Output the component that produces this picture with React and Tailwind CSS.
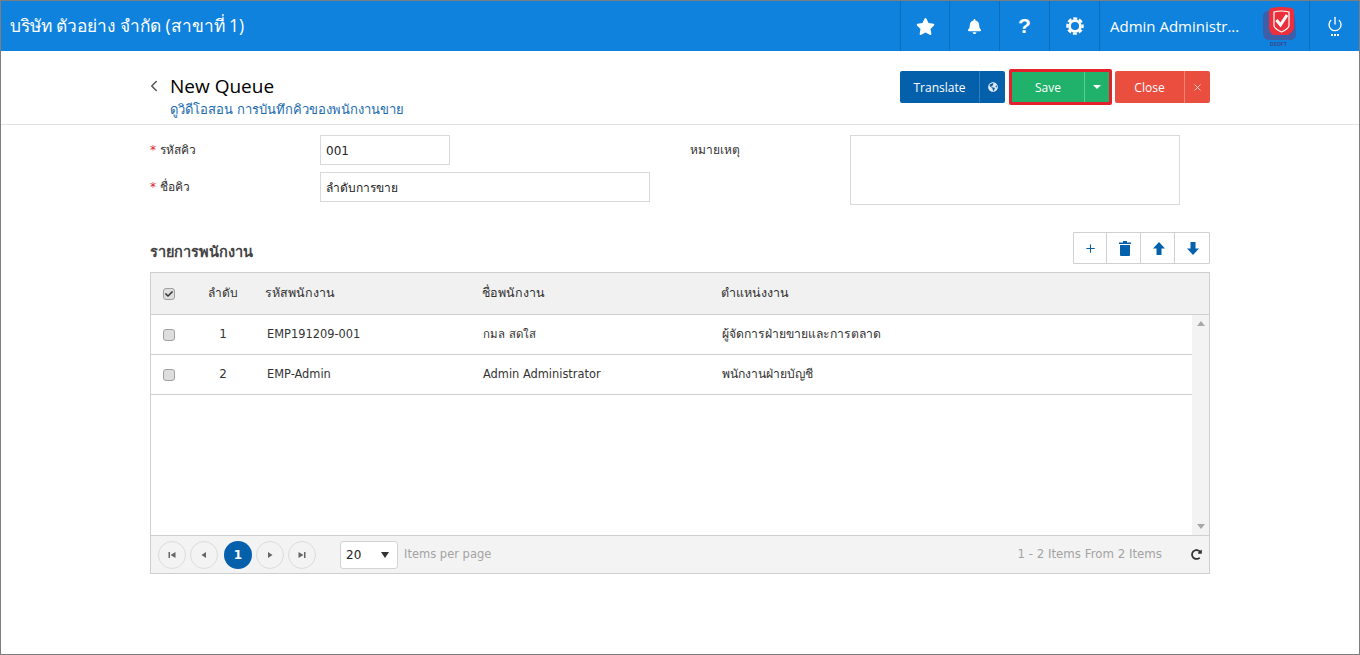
import React from "react";
import { FaStar, FaBell, FaGlobeAmericas, FaCheck, FaRedoAlt } from "react-icons/fa";
import { Power, ChevronLeft, Plus, X } from "lucide-react";

const employees = [
  { no: 1, code: "EMP191209-001", name: "กมล สดใส", position: "ผู้จัดการฝ่ายขายและการตลาด" },
  { no: 2, code: "EMP-Admin", name: "Admin Administrator", position: "พนักงานฝ่ายบัญชี" },
];

const rowGrid = "grid grid-cols-[36px_72px_216px_239px_1fr] items-center pb-[1px]";

function Gear() {
  return (
    <svg width="18" height="18" viewBox="0 0 20 20">
      <circle cx="10" cy="10" r="6" fill="none" stroke="white" strokeWidth="3" />
      <circle cx="10" cy="10" r="8.4" fill="none" stroke="white" strokeWidth="2.6" strokeDasharray="4.4 2.2" strokeDashoffset="2.2" />
    </svg>
  );
}

function Logo() {
  return (
    <svg width="38" height="44" viewBox="0 0 38 44">
      <path d="M6 7 L26 6 Q33 6 34 14 L35 30 Q35 36 28 36 L8 36 Q2 36 2 28 L2 12 Q2 8 6 7 Z" fill="#3d5ea8" />
      <path d="M10 4 Q20 2 31 4 Q33 5 33 8 L33 24 Q32 28 27 31 L12 31 Q9 29 8 24 L8 8 Q8 5 10 4 Z" fill="#ec2f3a" />
      <path d="M13 8 Q20 6 28 8 L28 22 Q27 25 20.5 28 Q14 25 13 22 Z" fill="none" stroke="white" strokeWidth="1.2" />
      <path d="M15.5 16 L19.5 21 L26 11" fill="none" stroke="white" strokeWidth="3" />
      <text x="9" y="42" fontSize="5" fontWeight="700" fill="#39488a" fontFamily="Liberation Sans, sans-serif">DSOFT</text>
    </svg>
  );
}

function Checkbox({ checked }) {
  return (
    <span className="w-[12px] h-[12px] rounded-[3px] border border-[#a0a0a0] bg-[#dedede] flex items-center justify-center">
      {checked && <FaCheck className="text-[#333] text-[8px]" />}
    </span>
  );
}

function PagerButton({ children }) {
  return (
    <button className="w-[28px] h-[28px] rounded-full border border-[#dcdcdc] bg-[#f3f3f3] flex items-center justify-center">
      <svg width="10" height="10" viewBox="0 0 10 10" fill="#666">{children}</svg>
    </button>
  );
}

export default function App() {
  return (
    <div className="h-[655px] overflow-hidden border border-[#7d7d7d] bg-white text-[#333] font-['Tahoma','DejaVu_Sans',sans-serif] text-[12px]">
      {/* Top bar */}
      <header className="h-[50px] bg-[#0f82de] flex items-stretch text-white">
        <div className="flex-1 pl-[9px] flex items-center text-[17.3px] font-['Open_Sans','Noto_Sans',sans-serif]">
          บริษัท ตัวอย่าง จำกัด (สาขาที่ 1)
        </div>
        <div className="w-[49px] border-l border-[#0a6dbd] flex items-center justify-center"><FaStar className="text-[19px]" /></div>
        <div className="w-[50px] border-l border-[#0a6dbd] flex items-center justify-center"><FaBell className="text-[15px]" /></div>
        <div className="w-[50px] border-l border-[#0a6dbd] flex items-center justify-center text-[21px] font-bold font-['Liberation_Sans',sans-serif]">?</div>
        <div className="w-[50px] border-l border-[#0a6dbd] flex items-center justify-center"><Gear /></div>
        <div className="w-[210px] border-l border-[#0a6dbd] flex items-center justify-between pl-[10px] pr-[10px]">
          <span className="text-[15px] font-['Open_Sans','Noto_Sans',sans-serif] whitespace-nowrap">Admin Administr...</span>
          <Logo />
        </div>
        <div className="w-[50px] border-l border-[#0a6dbd] flex flex-col items-center justify-center">
          <Power size={16} strokeWidth={2} />
          <span className="flex gap-[1px] mt-[2px]">
            <i className="w-[2px] h-[2px] bg-white" /><i className="w-[2px] h-[2px] bg-white" /><i className="w-[2px] h-[2px] bg-white" />
          </span>
        </div>
      </header>

      {/* Page title */}
      <div className="h-[74px] border-b border-[#e2e2e2] pl-[149px] pr-[149px] pt-[18px] flex justify-between items-start">
        <div className="flex items-start mt-[1px]">
          <ChevronLeft size={18} strokeWidth={2} className="text-[#555] mt-[7px] -ml-[5px] mr-[7px]" />
          <div>
            <h1 className="text-[19px] leading-[32px] text-black font-['Open_Sans','Noto_Sans',sans-serif]">New Queue</h1>
            <p className="text-[13px] leading-[14px] text-[#1a6bb0] mt-[1px]">ดูวิดีโอสอน การบันทึกคิวของพนักงานขาย</p>
          </div>
        </div>
        <div className="flex items-center h-[36px]">
          <div className="flex h-[32px] rounded-[2px] overflow-hidden bg-[#0560ac] text-white font-['Open_Sans','Noto_Sans',sans-serif]">
            <span className="w-[79px] pt-[1px] flex items-center justify-center">Translate</span>
            <span className="w-[26px] border-l border-[#2f7fc0] flex items-center justify-center"><FaGlobeAmericas className="text-[10px] text-[#dfe9f3]" /></span>
          </div>
          <div className="ml-[4px] flex h-[36px] border-[3px] border-[#e3202c] rounded-[2px] bg-[#20b16a] text-white font-['Open_Sans','Noto_Sans',sans-serif]">
            <span className="w-[72px] pt-[1px] flex items-center justify-center">Save</span>
            <span className="w-[25px] border-l border-[#5ccf97] flex items-center justify-center">
              <svg width="8" height="4" viewBox="0 0 8 4" fill="white"><path d="M0 0H8L4 4Z" /></svg>
            </span>
          </div>
          <div className="ml-[3px] flex h-[32px] rounded-[2px] overflow-hidden bg-[#ea4e3f] text-white font-['Open_Sans','Noto_Sans',sans-serif]">
            <span className="w-[69px] pt-[1px] flex items-center justify-center">Close</span>
            <span className="w-[26px] border-l border-[#f08478] flex items-center justify-center"><X size={11} strokeWidth={1.5} /></span>
          </div>
        </div>
      </div>

      <main className="pl-[149px] pr-[149px]">
        {/* Form */}
        <div className="pt-[10px] flex h-[107px]">
          <div className="w-[540px]">
            <div className="flex h-[30px]">
              <label className="w-[170px] pt-[6px]"><span className="text-[#e3202c]">* </span>รหัสคิว</label>
              <input readOnly value="001" className="w-[130px] h-[30px] border border-[#d9d9d9] px-[5px] pt-[2px] text-[12px] text-[#222]" />
            </div>
            <div className="flex h-[30px] mt-[7px]">
              <label className="w-[170px] pt-[6px]"><span className="text-[#e3202c]">* </span>ชื่อคิว</label>
              <input readOnly value="ลำดับการขาย" className="w-[330px] h-[30px] border border-[#d9d9d9] px-[5px] text-[12px] text-[#222]" />
            </div>
          </div>
          <label className="w-[160px] pt-[6px]">หมายเหตุ</label>
          <div className="w-[330px] h-[70px] border border-[#d9d9d9]" />
        </div>

        {/* List toolbar */}
        <div className="flex justify-between items-end h-[32px]">
          <h2 className="font-bold text-[14.5px] leading-[22px] text-[#444] mb-[1px]">รายการพนักงาน</h2>
          <div className="flex h-[32px] border border-[#d0d0d0] rounded-[1px] divide-x divide-[#d0d0d0] text-[#0560ac]">
            <span className="w-[33px] flex items-center justify-center"><Plus size={13} strokeWidth={2} /></span>
            <span className="w-[34px] pl-[2px] flex items-center justify-center">
              <svg width="12" height="15" viewBox="0 0 12 15" fill="currentColor"><path d="M0 1.5H4V0H8V1.5H12V3H0ZM1 4H11V14Q11 15 10 15H2Q1 15 1 14Z" /></svg>
            </span>
            <span className="w-[34px] pl-[2px] flex items-center justify-center">
              <svg width="12" height="13" viewBox="0 0 12 13" fill="currentColor"><path d="M6 0L12 6.5H8.5V13H3.5V6.5H0Z" /></svg>
            </span>
            <span className="w-[34px] pl-[2px] flex items-center justify-center">
              <svg width="12" height="13" viewBox="0 0 12 13" fill="currentColor"><path d="M3.5 0H8.5V6.5H12L6 13L0 6.5H3.5Z" /></svg>
            </span>
          </div>
        </div>

        {/* Grid */}
        <div className="mt-[8px] border border-[#cfcfcf]">
          <div className={`${rowGrid} h-[42px] bg-[#f1f1f1] border-b border-[#cfcfcf]`}>
            <span className="flex justify-center pt-[1px]"><Checkbox checked /></span>
            <span className="text-center">ลำดับ</span>
            <span className="pl-[6px] text-[12.5px]">รหัสพนักงาน</span>
            <span className="pl-[7px] text-[12.5px]">ชื่อพนักงาน</span>
            <span className="pl-[7px] text-[12.5px]">ตำแหน่งงาน</span>
          </div>
          <div className="flex h-[220px]">
            <div className="flex-1">
              {employees.map((e) => (
                <div key={e.no} className={`${rowGrid} h-[40px] border-b border-[#cfcfcf]`}>
                  <span className="flex justify-center pt-[1px]"><Checkbox /></span>
                  <span className="text-center">{e.no}</span>
                  <span className="pl-[8px] pt-[2px] text-[11.4px]">{e.code}</span>
                  <span className="pl-[8px] pt-[2px] text-[11.4px]">{e.name}</span>
                  <span className="pl-[8px] text-[12.2px]">{e.position}</span>
                </div>
              ))}
            </div>
            <div className="w-[17px] bg-[#f3f3f3] flex flex-col justify-between items-center py-[6px]">
              <svg width="8" height="5" viewBox="0 0 8 5" fill="#a8a8a8"><path d="M4 0L8 5H0Z" /></svg>
              <svg width="8" height="5" viewBox="0 0 8 5" fill="#a8a8a8"><path d="M0 0H8L4 5Z" /></svg>
            </div>
          </div>
          {/* Pager */}
          <div className="h-[38px] bg-[#f3f3f3] border-t border-[#cfcfcf] pl-[7px] pr-[7px] flex items-center">
            <div className="flex gap-[4px] items-center">
              <PagerButton><path d="M1.5 2H3V8H1.5ZM8.5 2V8L3.5 5Z" /></PagerButton>
              <PagerButton><path d="M7 2V8L2.5 5Z" /></PagerButton>
              <span className="ml-[2px] w-[28px] h-[28px] rounded-full bg-[#0560ac] text-white font-bold flex items-center justify-center">1</span>
              <PagerButton><path d="M3 2V8L7.5 5Z" /></PagerButton>
              <PagerButton><path d="M1.5 2L6.5 5L1.5 8ZM7 2H8.5V8H7Z" /></PagerButton>
            </div>
            <div className="ml-[24px] w-[58px] h-[28px] border border-[#d4d4d4] rounded-[3px] bg-white flex items-center justify-between pl-[5px] pr-[8px] text-[#222]">
              <span>20</span>
              <svg width="8" height="6" viewBox="0 0 8 6" fill="#333"><path d="M0 0H8L4 6Z" /></svg>
            </div>
            <span className="ml-[6px] text-[11.5px] text-[#a3a3a3]">Items per page</span>
            <span className="ml-auto text-[11.8px] text-[#a3a3a3]">1 - 2 Items From 2 Items</span>
            <FaRedoAlt className="ml-[29px] text-[11px] text-[#333]" />
          </div>
        </div>
      </main>
    </div>
  );
}
